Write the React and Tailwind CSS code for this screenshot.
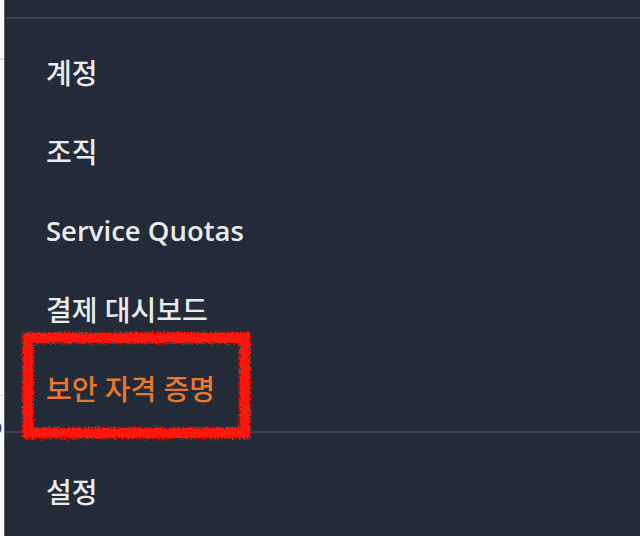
const items = ['계정', '조직', 'Service Quotas', '결제 대시보드'];

const font = { fontFamily: '"Open Sans", "Noto Sans CJK KR", sans-serif' };

export default function App() {
  return (
    <div className="flex w-[640px] h-[536px] overflow-hidden" style={font}>
      {/* page behind the menu */}
      <div className="relative w-[5px] shrink-0 bg-[#fafafa] border-r border-[#5a626c] overflow-hidden">
        <div className="absolute left-0 top-[58px] w-full h-[2px] bg-[#dcdcdc]" />
        <div className="absolute left-0 top-[395px] w-full h-px bg-[#dcdcdc]" />
        <span className="absolute left-[-13px] top-[412px] text-[26px] leading-none text-[#333]">o</span>
      </div>

      <div className="relative flex-1 bg-[#222b37] flex flex-col overflow-hidden">
        <div className="h-[17px] shrink-0" />
        <div className="h-[2px] shrink-0 bg-[#3a434f]" />
        <div className="h-[14px] shrink-0" />
        {items.map((t) => (
          <div
            key={t}
            className={
              t === 'Service Quotas'
                ? 'h-[79px] shrink-0 flex items-center pl-[41px] text-[27.5px] font-semibold text-[#e9ecef]'
                : 'h-[79px] shrink-0 flex items-center pl-[41px] text-[28px] font-medium text-[#e9ecef]'
            }
          >
            {t}
          </div>
        ))}
        <div className="h-[79px] shrink-0 flex items-center pl-[41px] text-[28px] font-medium text-[#e8782e]">
          보안 자격 증명
        </div>
        <div className="h-[3px] shrink-0" />
        <div className="h-[2px] shrink-0 bg-[#3a434f]" />
        <div className="h-[118px] shrink-0 flex items-center pl-[41px] text-[28px] font-medium text-[#e9ecef]">
          설정
        </div>

        {/* hand-drawn highlight */}
        <svg className="absolute left-[7px] top-[327px]" width="250" height="118" viewBox="0 0 250 118">
          <defs>
            <filter id="rough" x="-10%" y="-10%" width="120%" height="120%">
              <feTurbulence type="fractalNoise" baseFrequency="1.4" numOctaves="3" seed="3" />
              <feDisplacementMap in="SourceGraphic" scale="8" />
            </filter>
          </defs>
          <rect x="16" y="11" width="217" height="95" fill="none" stroke="#ff1208" strokeWidth="11" filter="url(#rough)" />
        </svg>
      </div>
    </div>
  );
}
